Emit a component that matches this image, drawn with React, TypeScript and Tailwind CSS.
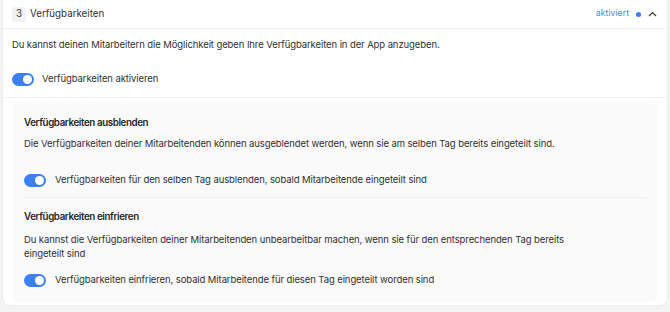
import React from "react";

function Toggle() {
  return (
    <span className="relative inline-flex h-[13px] w-[22px] shrink-0 items-center rounded-full bg-[#3b7ff0]">
      <span className="absolute right-[2px] h-[9px] w-[9px] rounded-full bg-white" />
    </span>
  );
}

export default function App() {
  return (
    <div
      className="h-[312px] w-[670px] bg-[#f4f4f5] px-[2px]"
      style={{ fontFamily: "Inter, 'Noto Sans', sans-serif" }}
    >
      <div className="h-[306px] rounded-b-lg border border-t-0 border-[#ececec] bg-white text-[#303030]">
        <div className="flex h-[29px] items-center justify-between border-b border-[#f0f0f0] pl-[9px] pr-[10px]">
          <div className="flex items-center gap-[4px]">
            <span className="flex h-[15px] w-[14px] items-center justify-center rounded-[3px] bg-[#f2f2f4] text-[9.75px]">
              3
            </span>
            <span className="text-[9.75px]">Verfügbarkeiten</span>
          </div>
          <div className="flex items-center gap-[7px]">
            <span className="text-[8.75px] text-[#4a86f0]">aktiviert</span>
            <span className="h-[5px] w-[5px] rounded-full bg-[#3b7ff0]" />
            <svg width="9" height="6" viewBox="0 0 9 6" fill="none">
              <path d="M1 5L4.5 1.5L8 5" stroke="#333" strokeWidth="1.2" />
            </svg>
          </div>
        </div>

        <div className="border-b border-[#f0f0f0] px-[9px] pb-[11px] pt-[9px] text-[9.5px] tracking-[-0.01em]">
          <p className="leading-[14px]">
            Du kannst deinen Mitarbeitern die Möglichkeit geben Ihre Verfügbarkeiten in der App anzugeben.
          </p>
          <div className="mt-[20px] flex h-[14px] items-center gap-[8px]">
            <Toggle />
            <span>Verfügbarkeiten aktivieren</span>
          </div>
        </div>

        <div className="px-[10px] pt-[4px] text-[9.5px] tracking-[-0.01em]">
          <div className="rounded-md bg-[#fafafa] px-[11px] pb-[15px] pt-[14px]">
            <div className="border-b border-[#efefef] pb-[10px]">
              <h3 className="text-[9.75px] font-semibold leading-[14px] tracking-[-0.04em] text-[#262626]">
                Verfügbarkeiten ausblenden
              </h3>
              <p className="mt-[7px] max-w-[560px] leading-[14px]">
                Die Verfügbarkeiten deiner Mitarbeitenden können ausgeblendet werden, wenn sie am selben Tag bereits eingeteilt sind.
              </p>
              <div className="mt-[22px] flex h-[14px] items-center gap-[9px]">
                <Toggle />
                <span>
                  Verfügbarkeiten für den selben Tag ausblenden, sobald Mitarbeitende eingeteilt sind
                </span>
              </div>
            </div>
            <div className="pt-[12px]">
              <h3 className="text-[9.75px] font-semibold leading-[14px] tracking-[-0.04em] text-[#262626]">
                Verfügbarkeiten einfrieren
              </h3>
              <p className="mt-[9px] max-w-[560px] leading-[14px]">
                Du kannst die Verfügbarkeiten deiner Mitarbeitenden unbearbeitbar machen, wenn sie für den entsprechenden Tag bereits eingeteilt sind
              </p>
              <div className="mt-[12px] flex h-[14px] items-center gap-[9px]">
                <Toggle />
                <span>
                  Verfügbarkeiten einfrieren, sobald Mitarbeitende für diesen Tag eingeteilt worden sind
                </span>
              </div>
            </div>
          </div>
        </div>
      </div>
    </div>
  );
}
